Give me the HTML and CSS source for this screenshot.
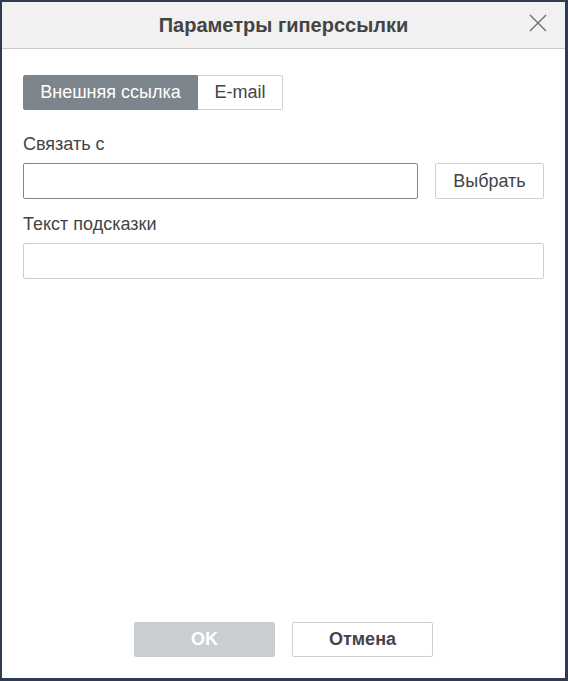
FILE: index.html
```html
<!DOCTYPE html>
<html lang="ru">
<head>
<meta charset="utf-8">
<link rel="stylesheet" href="styles.css">
</head>
<body>
<div class="dialog">
  <div class="header">
    <div class="title">Параметры гиперссылки</div>
    <svg class="close" width="20" height="20" viewBox="0 0 20 20"><path d="M2 2L18 18M18 2L2 18" stroke="#6e6e6e" stroke-width="1.4" fill="none"/></svg>
  </div>
  <div class="content">
    <div class="tabs">
      <div class="tab active">Внешняя ссылка</div>
      <div class="tab">E-mail</div>
    </div>
    <div class="label first">Связать с</div>
    <div class="row">
      <div class="input grow focused"></div>
      <div class="btn pick">Выбрать</div>
    </div>
    <div class="label">Текст подсказки</div>
    <div class="input"></div>
  </div>
  <div class="footer">
    <div class="fbtn ok">OK</div>
    <div class="fbtn cancel">Отмена</div>
  </div>
</div>
</body>
</html>
```
FILE: styles.css
```css
html, body { margin: 0; padding: 0; }
body {
  background: #2f3c4f;
  width: 568px;
  height: 681px;
  font-family: "Liberation Sans", Arial, sans-serif;
  color: #444;
}
.dialog {
  margin: 2px 3px 3px 2px;
  height: 676px;
  background: #fff;
  display: flex;
  flex-direction: column;
}
.header {
  height: 46px;
  background: #f1f1f1;
  border-bottom: 1px solid #cbcbcb;
  position: relative;
  display: flex;
  align-items: center;
  justify-content: center;
}
.title {
  font-weight: bold;
  font-size: 20px;
  color: #444;
}
.close {
  position: absolute;
  right: 17px;
  top: 11px;
}
.content {
  padding: 26px 21px 0 21px;
  flex: 1;
  display: flex;
  flex-direction: column;
}
.tabs {
  display: flex;
  height: 35px;
}
.tab {
  display: flex;
  align-items: center;
  justify-content: center;
  font-size: 18px;
  border: 1px solid #cfcfcf;
  border-left: none;
  border-radius: 0 2px 2px 0;
  width: 84px;
  color: #444;
}
.tab.active {
  background: #7d858c;
  border-color: #7d858c;
  color: #fff;
  width: 175px;
  border-radius: 2px 0 0 2px;
  border-left: 1px solid #7d858c;
  box-sizing: border-box;
}
.label {
  font-size: 18px;
  margin-top: 16px;
  margin-bottom: 9px;
  line-height: 19px;
}
.label.first { margin-top: 25px; }
.row {
  display: flex;
  gap: 17px;
}
.input {
  height: 34px;
  border: 1px solid #cfcfcf;
  border-radius: 2px;
}
.input.grow { flex: 1; }
.input.focused { border-color: #848484; }
.btn {
  width: 107px;
  height: 34px;
  border: 1px solid #cfcfcf;
  border-radius: 2px;
  display: flex;
  align-items: center;
  justify-content: center;
  font-size: 18px;
}
.footer {
  display: flex;
  justify-content: center;
  gap: 17px;
  padding-bottom: 21px;
}
.fbtn {
  width: 141px;
  height: 35px;
  box-sizing: border-box;
  display: flex;
  align-items: center;
  justify-content: center;
  font-size: 18px;
  font-weight: bold;
  border-radius: 2px;
}
.ok { background: #cbced1; color: #fff; }
.cancel { border: 1px solid #cfcfcf; color: #444; }
```
